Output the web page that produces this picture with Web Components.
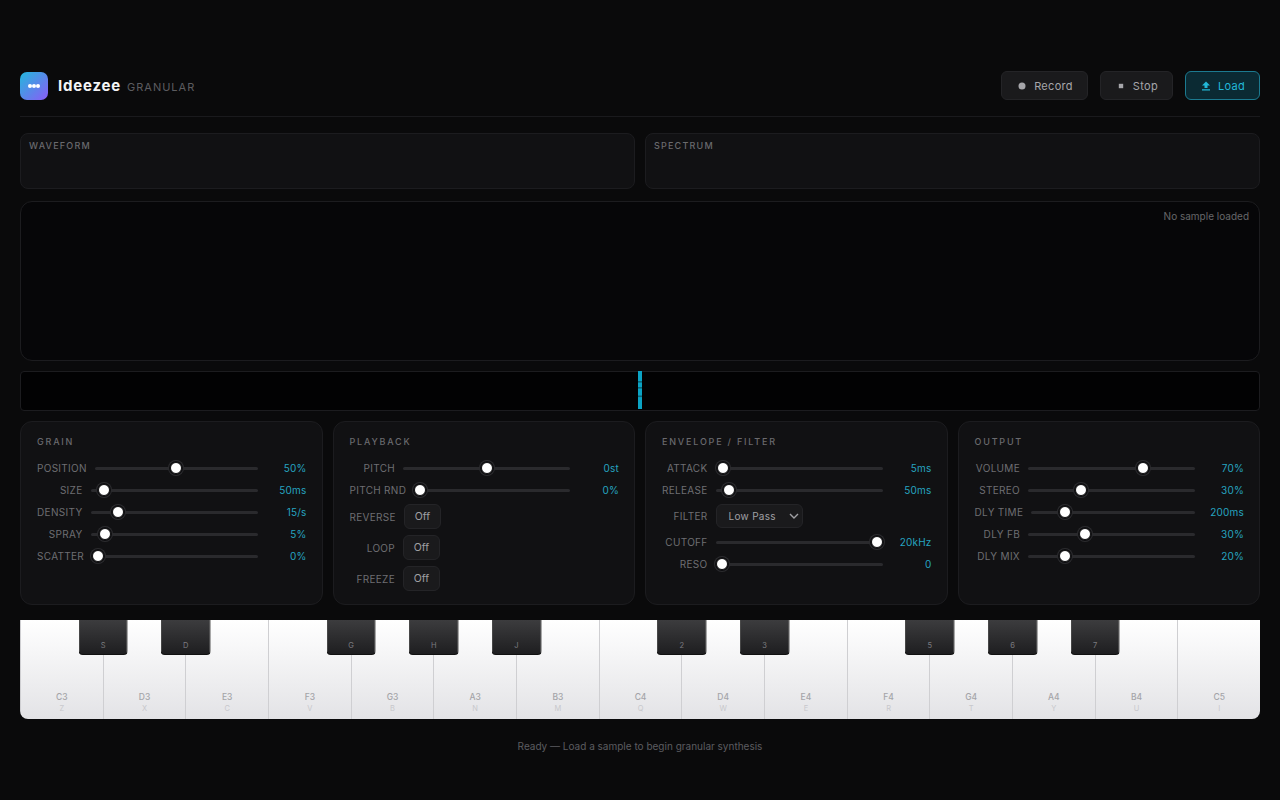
<!DOCTYPE html>
<html lang="en">
<head>
<meta charset="utf-8">
<title>Ideezee Granular</title>
<style>
    html, body {
        margin: 0;
        height: 100%;
        background: #0a0a0b;
        color: #e8e8ea;
        font-family: Inter, "Liberation Sans", sans-serif;
    }
</style>
</head>
<body>
<gs-app>
    <gs-header slot="header">
        <gs-button icon="record">Record</gs-button>
        <gs-button icon="stop">Stop</gs-button>
        <gs-button icon="load" accent>Load</gs-button>
    </gs-header>
    <gs-scope slot="scopes" label="Waveform"></gs-scope>
    <gs-scope slot="scopes" label="Spectrum"></gs-scope>
    <gs-stage slot="stage">No sample loaded</gs-stage>
    <gs-grains slot="grains"></gs-grains>
    <gs-panel slot="panels" title="Grain">
        <gs-slider label="Position" pos="50" value="50%"></gs-slider>
        <gs-slider label="Size" pos="5" value="50ms"></gs-slider>
        <gs-slider label="Density" pos="14" value="15/s"></gs-slider>
        <gs-slider label="Spray" pos="5.5" value="5%"></gs-slider>
        <gs-slider label="Scatter" pos="0" value="0%"></gs-slider>
    </gs-panel>
    <gs-panel slot="panels" title="Playback">
        <gs-slider label="Pitch" pos="50" value="0st"></gs-slider>
        <gs-slider label="Pitch Rnd" pos="0" value="0%"></gs-slider>
        <gs-toggle label="Reverse"></gs-toggle>
        <gs-toggle label="Loop"></gs-toggle>
        <gs-toggle label="Freeze"></gs-toggle>
    </gs-panel>
    <gs-panel slot="panels" title="Envelope / Filter">
        <gs-slider label="Attack" pos="1" value="5ms"></gs-slider>
        <gs-slider label="Release" pos="4.5" value="50ms"></gs-slider>
        <gs-select label="Filter" value="Low Pass"></gs-select>
        <gs-slider label="Cutoff" pos="100" value="20kHz"></gs-slider>
        <gs-slider label="Reso" pos="0" value="0"></gs-slider>
    </gs-panel>
    <gs-panel slot="panels" title="Output">
        <gs-slider label="Volume" pos="70" value="70%"></gs-slider>
        <gs-slider label="Stereo" pos="30" value="30%"></gs-slider>
        <gs-slider label="Dly Time" pos="18.5" value="200ms"></gs-slider>
        <gs-slider label="Dly FB" pos="33" value="30%"></gs-slider>
        <gs-slider label="Dly Mix" pos="20" value="20%"></gs-slider>
    </gs-panel>
    <gs-piano slot="piano"></gs-piano>
    <gs-status slot="status">Ready — Load a sample to begin granular synthesis</gs-status>
</gs-app>

<script>
function defineEl(name, css, html, setup) {
    customElements.define(name, class extends HTMLElement {
        constructor() {
            super();
            this.attachShadow({mode: 'open'});
        }
        connectedCallback() {
            const body = typeof html === 'function' ? html(this) : html;
            this.shadowRoot.innerHTML = `<style>${css}</style>${body}`;
            if (setup) setup(this);
        }
    });
}

defineEl('gs-app', `
    :host { display: flex; flex-direction: column; padding: 71px 20px 0; box-sizing: border-box; height: 800px; overflow: hidden; }
    .scopes { display: grid; grid-template-columns: 1fr 1fr; gap: 10px; margin-bottom: 12px; }
    .panels { display: grid; grid-template-columns: repeat(4, 1fr); gap: 10px; margin: 10px 0 15px; }
`, `
    <slot name="header"></slot>
    <div class="scopes"><slot name="scopes"></slot></div>
    <slot name="stage"></slot>
    <slot name="grains"></slot>
    <div class="panels"><slot name="panels"></slot></div>
    <slot name="piano"></slot>
    <slot name="status"></slot>
`);

defineEl('gs-header', `
    :host { display: flex; align-items: center; justify-content: space-between; padding-bottom: 16px; margin-bottom: 16px; border-bottom: 1px solid #1a1a1d; }
    .brand { display: flex; align-items: center; }
    .logo { width: 28px; height: 28px; border-radius: 7px; background: linear-gradient(135deg, #22b8dc, #8b5cf6); display: flex; align-items: center; justify-content: center; margin-right: 10px; }
    .logo i { width: 4px; height: 4px; border-radius: 50%; background: #fff; }
    h1 { margin: 0 6px 0 0; font-size: 15px; font-weight: 700; letter-spacing: 0.8px; color: #f4f4f5; }
    span { font-size: 11px; letter-spacing: 1px; color: #5c5c60; padding-top: 2px; }
    .actions { display: flex; gap: 12px; }
`, `
    <div class="brand">
        <div class="logo"><i></i><i></i><i></i></div>
        <h1>Ideezee</h1>
        <span>GRANULAR</span>
    </div>
    <div class="actions"><slot></slot></div>
`);

const ICONS = {
    record: '<circle cx="6" cy="6" r="3.5" fill="currentColor"/>',
    stop: '<rect x="3.8" y="3.8" width="4.4" height="4.4" fill="currentColor"/>',
    load: '<path d="M6 1.5 L10 5.5 H7.5 V8 H4.5 V5.5 H2 Z M2 9.2 H10 V10.4 H2 Z" fill="currentColor"/>'
};

defineEl('gs-button', `
    :host { display: inline-flex; align-items: center; gap: 6px; height: 29px; box-sizing: border-box; padding: 0 14px; border: 1px solid #242427; border-radius: 6px; background: #1a1a1c; color: #a6a6aa; font-size: 11px; letter-spacing: 0.3px; }
    :host([accent]) { background: #0b2a33; border-color: #1c7a90; color: #22b8d8; }
    svg { width: 12px; height: 12px; display: block; }
`, el => `<svg viewBox="0 0 12 12">${ICONS[el.getAttribute('icon')]}</svg><slot></slot>`);

defineEl('gs-scope', `
    :host { display: block; height: 56px; box-sizing: border-box; padding: 6px 8px; background: #111113; border: 1px solid #1c1c1f; border-radius: 8px; color: #6a6a6e; font-size: 9px; font-weight: 500; letter-spacing: 1.2px; text-transform: uppercase; }
`, el => `<div>${el.getAttribute('label')}</div>`);

defineEl('gs-stage', `
    :host { display: block; height: 160px; box-sizing: border-box; padding: 8px 10px; text-align: right; background: #060608; border: 1px solid #1c1c1f; border-radius: 12px; color: #66666a; font-size: 10px; margin-bottom: 10px; }
`, `<slot></slot>`);

defineEl('gs-grains', `
    :host { display: block; height: 40px; box-sizing: border-box; background: #020203; border: 1px solid #1c1c1f; border-radius: 4px; }
    svg { display: block; width: 100%; height: 100%; overflow: visible; }
`, `
    <svg viewBox="0 0 1238 38" preserveAspectRatio="none">
        <rect x="617" y="-1" width="4" height="38" fill="#0ba3c4"/>
        <rect x="617" y="9" width="4" height="1.6" fill="#0a6578"/>
        <rect x="617" y="15" width="4" height="1.6" fill="#0a6578"/>
        <rect x="617" y="23.5" width="4" height="1.6" fill="#0a6578"/>
    </svg>
`);

defineEl('gs-panel', `
    :host { display: block; box-sizing: border-box; padding: 14px 16px 13px; background: #111113; border: 1px solid #1c1c1f; border-radius: 12px; min-width: 0; }
    h2 { margin: 0 0 12px; font-size: 9px; font-weight: 500; line-height: 12px; letter-spacing: 1.8px; text-transform: uppercase; color: #6a6a6e; }
    .rows { display: flex; flex-direction: column; gap: 6px; }
`, el => `<h2>${el.getAttribute('title')}</h2><div class="rows"><slot></slot></div>`);

const LABEL_CSS = `
    .label { min-width: 45.5px; text-align: right; font-size: 10px; letter-spacing: 0.3px; text-transform: uppercase; color: #6e6e72; white-space: nowrap; }
`;

defineEl('gs-slider', LABEL_CSS + `
    :host { display: flex; align-items: center; gap: 8px; height: 16px; }
    input { flex: 1; min-width: 0; margin: 0; height: 16px; background: transparent; -webkit-appearance: none; appearance: none; }
    input::-webkit-slider-runnable-track { height: 3px; background: #2a2a2d; border-radius: 2px; }
    input::-webkit-slider-thumb { -webkit-appearance: none; box-sizing: border-box; width: 12px; height: 12px; margin-top: -4.5px; border: 1px solid #0e0e10; border-radius: 50%; background: #fff; box-shadow: 0 0 0 1px #0e0e10, 0 0 0 2px #2c2c2f; }
    .value { width: 41px; margin-right: -1px; text-align: right; font-size: 10px; letter-spacing: 0.2px; color: #26a4c0; white-space: nowrap; }
`, el => `
    <span class="label">${el.getAttribute('label')}</span>
    <input type="range" min="0" max="100" step="0.1" value="${el.getAttribute('pos')}">
    <span class="value">${el.getAttribute('value')}</span>
`);

defineEl('gs-toggle', LABEL_CSS + `
    :host { display: flex; align-items: center; gap: 8px; }
    button { width: 37px; height: 25px; padding: 0; background: #1a1a1c; border: 1px solid #242427; border-radius: 6px; color: #a0a0a4; font: 10.5px Inter, "Liberation Sans", sans-serif; }
`, el => `<span class="label">${el.getAttribute('label')}</span><button>Off</button>`);

defineEl('gs-select', LABEL_CSS + `
    :host { display: flex; align-items: center; gap: 8px; }
    .box { display: flex; align-items: center; justify-content: space-between; box-sizing: border-box; width: 87px; height: 24px; padding: 0 3px 0 12px; background: #1a1a1c; border: 1px solid #242427; border-radius: 6px; color: #a0a0a4; font-size: 10px; letter-spacing: 0.3px; }
    svg { width: 10px; height: 10px; display: block; }
`, el => `
    <span class="label">${el.getAttribute('label')}</span>
    <div class="box"><span>${el.getAttribute('value')}</span>
        <svg viewBox="0 0 10 10"><path d="M1 3 L5 7 L9 3" fill="none" stroke="#a0a0a4" stroke-width="1.4"/></svg>
    </div>
`);

// white keys in order, black keys sit on the boundary after white key n
const WHITE = ['C3:Z','D3:X','E3:C','F3:V','G3:B','A3:N','B3:M','C4:Q','D4:W','E4:E','F4:R','G4:T','A4:Y','B4:U','C5:I'];
const BLACK = [[1,'S'],[2,'D'],[4,'G'],[5,'H'],[6,'J'],[8,'2'],[9,'3'],[11,'5'],[12,'6'],[13,'7']];

defineEl('gs-piano', `
    :host { display: flex; position: relative; height: 99px; border-radius: 0 0 8px 8px; overflow: hidden; }
    .white { flex: 1; box-sizing: border-box; display: flex; flex-direction: column; align-items: center; justify-content: flex-end; padding-bottom: 4px; background: linear-gradient(180deg, #ffffff, #e3e3e6); border-left: 1px solid #cfcfd2; }
    .white:first-child { border-left: 0; }
    .white b { font-size: 8.5px; font-weight: 500; line-height: 12px; color: #a4a4a8; }
    .white i { font-size: 7.5px; font-style: normal; line-height: 12px; color: #c8c8cc; }
    .black { position: absolute; top: 0; width: 49.6px; height: 35px; box-sizing: border-box; transform: translateX(calc(-50% + 0.5px)); display: flex; align-items: flex-end; justify-content: center; padding-bottom: 4px; background: linear-gradient(180deg, #3c3c3e, #1e1e20); border: 1px solid #111; border-top: 0; border-radius: 0 0 4px 4px; color: #7c7c80; font-size: 7.5px; }
`, () => WHITE.map(k => {
    const [note, key] = k.split(':');
    return `<div class="white"><b>${note}</b><i>${key}</i></div>`;
}).join('') + BLACK.map(([n, key]) =>
    `<div class="black" style="left:${(n / 15 * 100).toFixed(3)}%">${key}</div>`
).join(''));

defineEl('gs-status', `
    :host { display: block; margin-top: 21px; text-align: center; font-size: 10px; line-height: 13px; color: #5c5c60; }
`, `<slot></slot>`);
</script>
</body>
</html>
